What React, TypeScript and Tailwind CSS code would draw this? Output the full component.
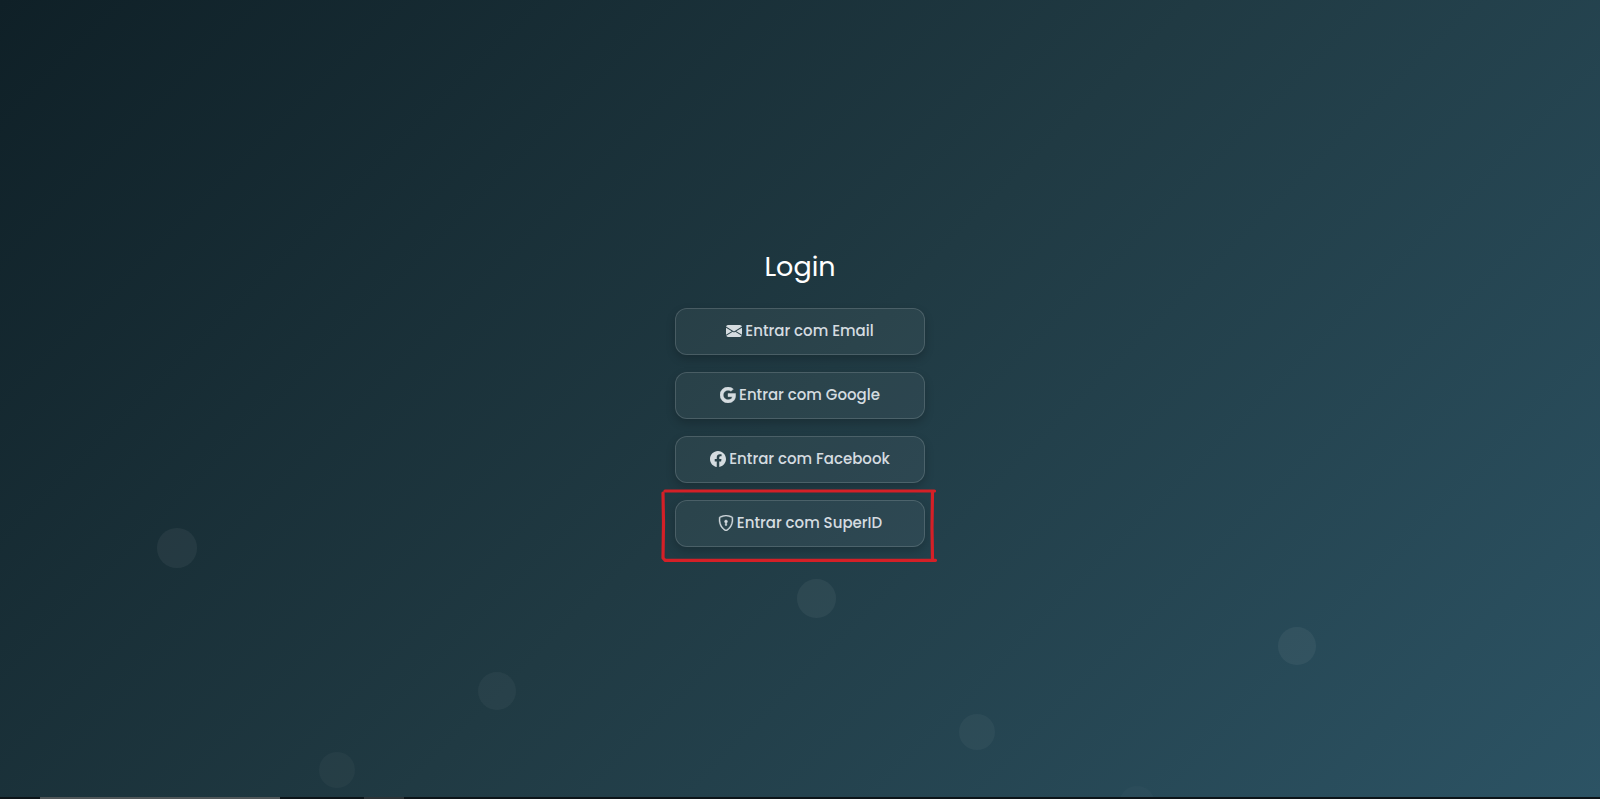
import type { IconType } from "react-icons";
import { BsEnvelopeFill, BsFacebook, BsGoogle, BsShieldLock } from "react-icons/bs";

type Option = { label: string; icon: IconType; iconClass?: string; marked?: boolean };

const options: Option[] = [
  { label: "Entrar com Email", icon: BsEnvelopeFill },
  { label: "Entrar com Google", icon: BsGoogle, iconClass: "stroke-[0.4]" },
  { label: "Entrar com Facebook", icon: BsFacebook },
  { label: "Entrar com SuperID", icon: BsShieldLock, iconClass: "stroke-[0.4]", marked: true },
];

const bubbles = [
  "left-[157px] top-[528px] size-10 bg-white/5",
  "left-[319px] top-[752px] size-9 bg-white/3",
  "left-[478px] top-[672px] size-[38px] bg-white/4",
  "left-[797px] top-[579px] size-[39px] bg-white/5",
  "left-[959px] top-[714px] size-9 bg-white/4",
  "left-[1119px] top-[786px] size-9 bg-white/2",
  "left-[1278px] top-[627px] size-[38px] bg-white/5",
];

function Marker() {
  return (
    <svg
      className="pointer-events-none absolute -left-[14px] -top-[12px] h-[77px] w-[278px]"
      viewBox="0 0 278 77"
      fill="none"
      stroke="#d42027"
      strokeWidth="3.2"
      strokeLinecap="round"
      strokeLinejoin="round"
      aria-hidden="true"
    >
      <path d="M4 3 H273.500 M2 5 L2.500 35 L2 70 L4 72.300 H274.500 M271.500 3 L271 40 L271.500 72" />
    </svg>
  );
}

function LoginButton({ label, icon: Icon, iconClass, marked }: Option) {
  return (
    <div className="relative">
      <button
        type="button"
        className="flex w-full items-center justify-center gap-[3px] rounded-xl border border-white/15 bg-white/5 pt-[10px] pb-3 text-[15px] leading-[23px] font-medium text-[#d5dce0] shadow-[0_4px_10px_rgba(0,0,0,0.2)]"
      >
        <Icon className={`size-4 shrink-0 ${iconClass ?? "stroke-0"}`} aria-hidden="true" />
        {label}
      </button>
      {marked && <Marker />}
    </div>
  );
}

export default function App() {
  return (
    <div className="relative flex min-h-screen flex-col overflow-hidden bg-[linear-gradient(135deg,#0f2027,#203a43,#2c5364)] font-['Poppins','Inter',sans-serif]">
      {bubbles.map((place) => (
        <span key={place} className={`absolute rounded-full ${place}`} />
      ))}
      <main className="relative flex grow flex-col items-center justify-center pb-1">
        <h1 className="mb-5 text-[27px] leading-[42px] text-white">Login</h1>
        <div className="flex w-[250px] flex-col gap-[17px]">
          {options.map((option) => (
            <LoginButton key={option.label} {...option} />
          ))}
        </div>
      </main>
      <footer className="relative flex h-0.5 bg-[#0c1418]">
        <span className="ml-10 w-60 bg-[#505658]" />
        <span className="ml-[84px] w-10 bg-[#2c3336]" />
      </footer>
    </div>
  );
}
